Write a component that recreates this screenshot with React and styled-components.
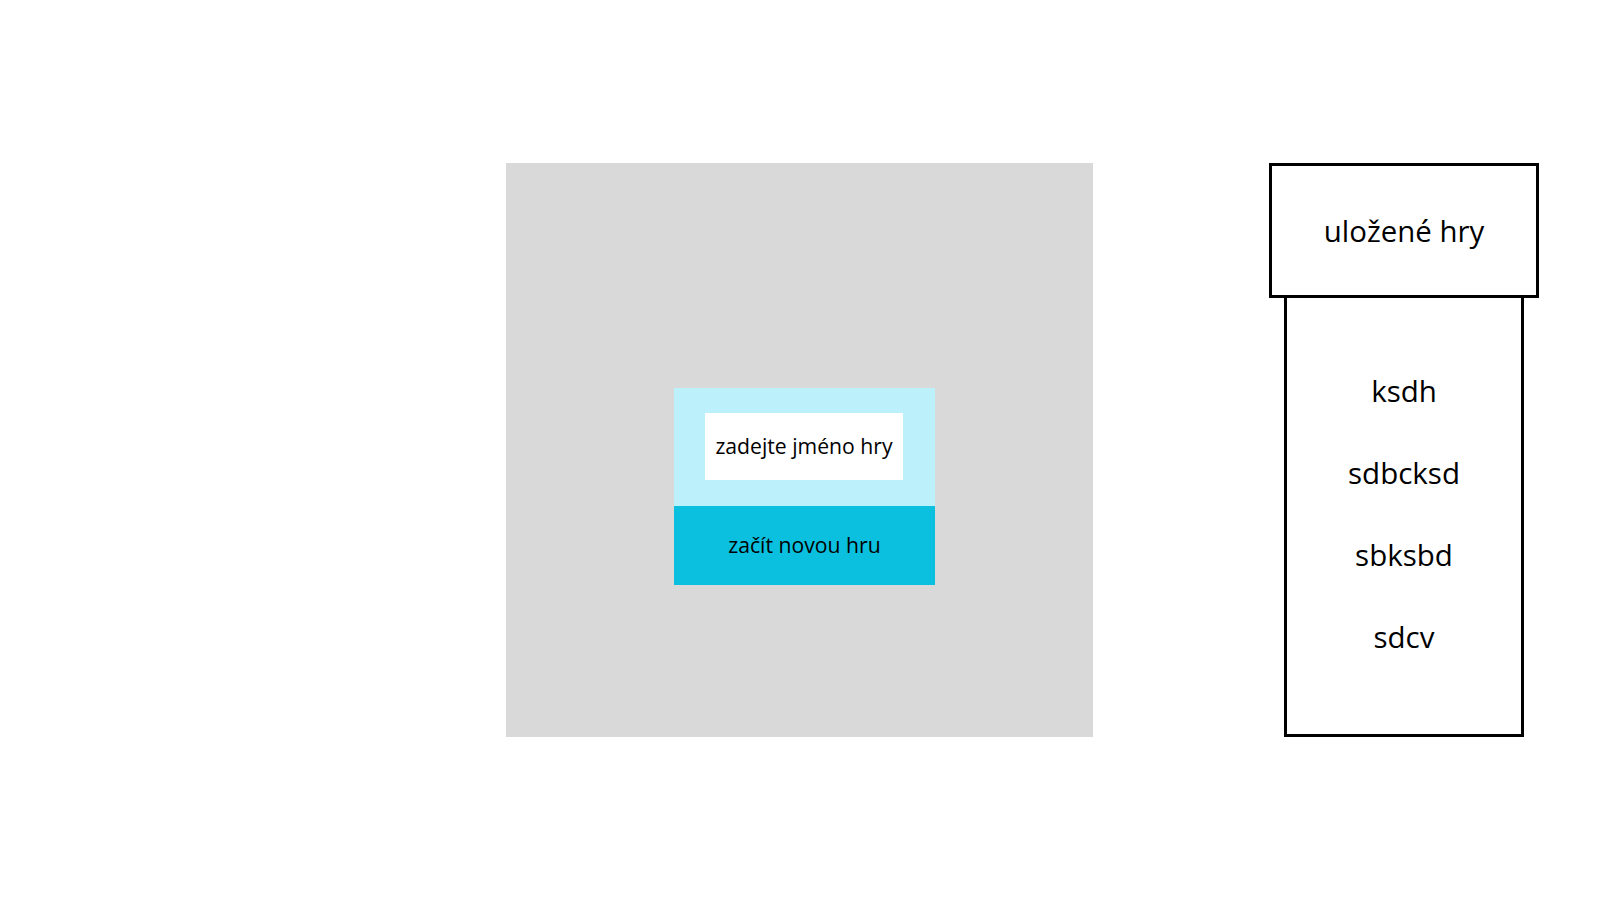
import React from 'react';
import styled, { createGlobalStyle } from 'styled-components';

const GlobalStyle = createGlobalStyle`
  * {
    box-sizing: border-box;
  }
  body {
    margin: 0;
    background: #fff;
    font-family: 'Open Sans', 'Noto Sans', sans-serif;
    color: #000;
  }
`;

const Page = styled.div`
  display: flex;
  align-items: flex-start;
  padding: 163px 0 0 506px;
  gap: 176px;
  width: 1600px;
  height: 900px;
`;

const Board = styled.div`
  width: 587px;
  height: 574px;
  background: #d9d9d9;
  padding: 225px 0 0 168px;
`;

const NewGame = styled.div`
  display: flex;
  flex-direction: column;
  width: 261px;
`;

const NameArea = styled.div`
  background: #bcf1fb;
  padding: 25px 32px 26px 31px;
`;

const NameInput = styled.div`
  height: 67px;
  background: #fff;
  display: flex;
  align-items: center;
  justify-content: center;
  padding-bottom: 2px;
  font-size: 21.2px;
`;

const StartButton = styled.div`
  height: 79px;
  background: #0bc0df;
  display: flex;
  align-items: center;
  justify-content: center;
  padding-bottom: 2px;
  font-size: 21.2px;
  cursor: pointer;
`;

const Saved = styled.div`
  display: flex;
  flex-direction: column;
  align-items: center;
  width: 270px;
`;

const SavedHeader = styled.div`
  width: 270px;
  height: 135px;
  border: 3px solid #000;
  display: flex;
  align-items: center;
  justify-content: center;
  font-size: 29.4px;
`;

const SavedList = styled.div`
  width: 240px;
  height: 439px;
  border: 3px solid #000;
  border-top: none;
  display: flex;
  flex-direction: column;
  align-items: center;
  justify-content: center;
  gap: 42px;
  padding-bottom: 4px;
`;

const SavedItem = styled.div`
  font-size: 29.5px;
  line-height: 40px;
`;

const savedGames = ['ksdh', 'sdbcksd', 'sbksbd', 'sdcv'];

const App = () => (
  <>
    <GlobalStyle />
    <Page>
      <Board>
        <NewGame>
          <NameArea>
            <NameInput>zadejte jméno hry</NameInput>
          </NameArea>
          <StartButton>začít novou hru</StartButton>
        </NewGame>
      </Board>
      <Saved>
        <SavedHeader>uložené hry</SavedHeader>
        <SavedList>
          {savedGames.map(name => (
            <SavedItem key={name}>{name}</SavedItem>
          ))}
        </SavedList>
      </Saved>
    </Page>
  </>
);

export default App;
